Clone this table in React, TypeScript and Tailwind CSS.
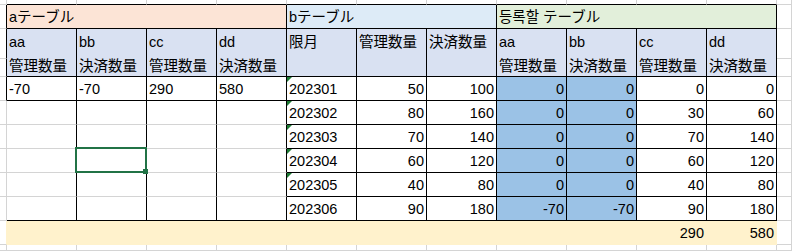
import React from "react";

const ROW_START = [
  "row-start-1", "row-start-2", "row-start-3", "row-start-4", "row-start-5", "row-start-6",
  "row-start-7", "row-start-8", "row-start-9", "row-start-10", "row-start-11", "row-start-12",
];
const COL_START = [
  "col-start-1", "col-start-2", "col-start-3", "col-start-4", "col-start-5", "col-start-6", "col-start-7",
  "col-start-8", "col-start-9", "col-start-10", "col-start-11", "col-start-12", "col-start-13",
];
const ROW_SPAN = ["", "row-span-1", "row-span-2"];
const COL_SPAN = [
  "", "col-span-1", "col-span-2", "col-span-3", "col-span-4", "col-span-5", "col-span-6",
  "col-span-7", "col-span-8", "col-span-9", "col-span-10", "col-span-11",
];

type CellProps = {
  r: number;
  c: number;
  rs?: number;
  cs?: number;
  right?: "g" | "k" | "y";
  bottom?: "g" | "k" | "y";
  className?: string;
  children?: React.ReactNode;
};

const RIGHT = { g: "border-r-[#d4d4d4]", k: "border-r-black", y: "border-r-[#fff2cc]" };
const BOTTOM = { g: "border-b-[#d4d4d4]", k: "border-b-black", y: "border-b-[#fff2cc]" };

function Cell({ r, c, rs = 1, cs = 1, right = "g", bottom = "g", className = "bg-white", children }: CellProps) {
  return (
    <div
      className={[
        ROW_START[r],
        COL_START[c],
        ROW_SPAN[rs],
        COL_SPAN[cs],
        "relative min-w-0 overflow-visible whitespace-nowrap border-r border-b",
        RIGHT[right],
        BOTTOM[bottom],
        className,
      ].join(" ")}
    >
      {children}
    </div>
  );
}

const headers: string[][] = [
  ["aa", "管理数量"],
  ["bb", "決済数量"],
  ["cc", "管理数量"],
  ["dd", "決済数量"],
  ["限月"],
  ["管理数量"],
  ["決済数量"],
  ["aa", "管理数量"],
  ["bb", "決済数量"],
  ["cc", "管理数量"],
  ["dd", "決済数量"],
];

const aRow = ["-70", "-70", "290", "580"];
const months = ["202301", "202302", "202303", "202304", "202305", "202306"];
const bKanri = [50, 80, 70, 60, 40, 90];
const bKessai = [100, 160, 140, 120, 80, 180];
const cAa = [0, 0, 0, 0, 0, -70];
const cBb = [0, 0, 0, 0, 0, -70];
const cCc = [0, 30, 70, 60, 40, 90];
const cDd = [0, 60, 140, 120, 80, 180];

function Triangle() {
  return (
    <span className="absolute left-0 top-0 h-0 w-0 border-t-[5px] border-r-[5px] border-t-[#1e7b34] border-r-transparent" />
  );
}

export default function App() {
  const cells: React.ReactNode[] = [];
  let k = 0;
  const add = (n: React.ReactNode) => {
    cells.push(<React.Fragment key={k++}>{n}</React.Fragment>);
  };

  // Row 0 (partial top row)
  for (let c = 0; c <= 12; c++) {
    add(<Cell r={0} c={c} bottom={c >= 1 && c <= 11 ? "k" : "g"} />);
  }

  // Row 1: titles
  add(<Cell r={1} c={0} right="k" />);
  add(
    <Cell r={1} c={1} cs={4} right="k" bottom="k" className="bg-[#fce4d6] pl-[2px]">
      aテーブル
    </Cell>
  );
  add(
    <Cell r={1} c={5} cs={3} right="k" bottom="k" className="bg-[#ddebf7] pl-[2px]">
      bテーブル
    </Cell>
  );
  add(
    <Cell r={1} c={8} cs={4} right="k" bottom="k" className="bg-[#e2efda] pl-[2px]">
      등록할 テーブル
    </Cell>
  );
  add(<Cell r={1} c={12} />);

  // Rows 2-3: headers
  add(<Cell r={2} c={0} right="k" />);
  add(<Cell r={3} c={0} right="k" />);
  headers.forEach((lines, i) => {
    add(
      <Cell r={2} c={i + 1} rs={2} right="k" bottom="k" className="bg-[#d9e1f2] pl-[2px] pt-[1px]">
        {lines.map((l, j) => (
          <div key={j}>{l}</div>
        ))}
      </Cell>
    );
  });
  add(<Cell r={2} c={12} />);
  add(<Cell r={3} c={12} />);

  // Data rows 4-9
  for (let i = 0; i < 6; i++) {
    const r = 4 + i;
    add(<Cell r={r} c={0} right={i === 0 ? "k" : "g"} />);
    for (let j = 0; j < 4; j++) {
      const isSel = j === 1 && i === 3;
      add(
        <Cell
          r={r}
          c={j + 1}
          right="k"
          bottom={i === 0 || i === 5 ? "k" : "g"}
          className="bg-white pl-[2px]"
        >
          {i === 0 ? aRow[j] : null}
          {isSel ? (
            <>
              <span className="absolute -left-[2px] -top-[2px] -right-[1px] -bottom-[1px] z-10 border-2 border-[#217346]" />
              <span className="absolute -right-[2px] -bottom-[2px] z-20 h-[5px] w-[5px] bg-[#217346]" />
            </>
          ) : null}
        </Cell>
      );
    }
    add(
      <Cell r={r} c={5} right="k" bottom="k" className="bg-white pl-[2px]">
        {i < 5 ? <Triangle /> : null}
        {months[i]}
      </Cell>
    );
    add(
      <Cell r={r} c={6} right="k" bottom="k" className="bg-white pr-[2px] text-right">
        {bKanri[i]}
      </Cell>
    );
    add(
      <Cell r={r} c={7} right="k" bottom="k" className="bg-white pr-[2px] text-right">
        {bKessai[i]}
      </Cell>
    );
    add(
      <Cell r={r} c={8} right="k" bottom="k" className="bg-[#9bc2e6] pr-[2px] text-right">
        {cAa[i]}
      </Cell>
    );
    add(
      <Cell r={r} c={9} right="k" bottom="k" className="bg-[#9bc2e6] pr-[2px] text-right">
        {cBb[i]}
      </Cell>
    );
    add(
      <Cell r={r} c={10} right="k" bottom="k" className="bg-white pr-[2px] text-right">
        {cCc[i]}
      </Cell>
    );
    add(
      <Cell r={r} c={11} right="k" bottom="k" className="bg-white pr-[2px] text-right">
        {cDd[i]}
      </Cell>
    );
    add(<Cell r={r} c={12} />);
  }

  // Row 10: totals (yellow)
  add(<Cell r={10} c={0} right="y" />);
  add(<Cell r={10} c={1} cs={9} right="y" bottom="y" className="bg-[#fff2cc]" />);
  add(
    <Cell r={10} c={10} right="y" bottom="y" className="bg-[#fff2cc] pr-[2px] text-right">
      290
    </Cell>
  );
  add(
    <Cell r={10} c={11} right="y" bottom="y" className="bg-[#fff2cc] pr-[2px] text-right">
      580
    </Cell>
  );
  add(<Cell r={10} c={12} />);

  // Row 11: partial bottom row
  for (let c = 0; c <= 12; c++) {
    add(<Cell r={11} c={c} />);
  }

  return (
    <div className="grid h-[251px] w-[792px] grid-cols-[7px_repeat(11,70px)_1fr] grid-rows-[5px_24px_30px_18px_repeat(7,24px)_1fr] overflow-hidden bg-white font-['Liberation_Sans','Noto_Sans_CJK_JP','Noto_Sans_CJK_KR',sans-serif] text-[14.5px] leading-[24px] text-black">
      {cells}
    </div>
  );
}
